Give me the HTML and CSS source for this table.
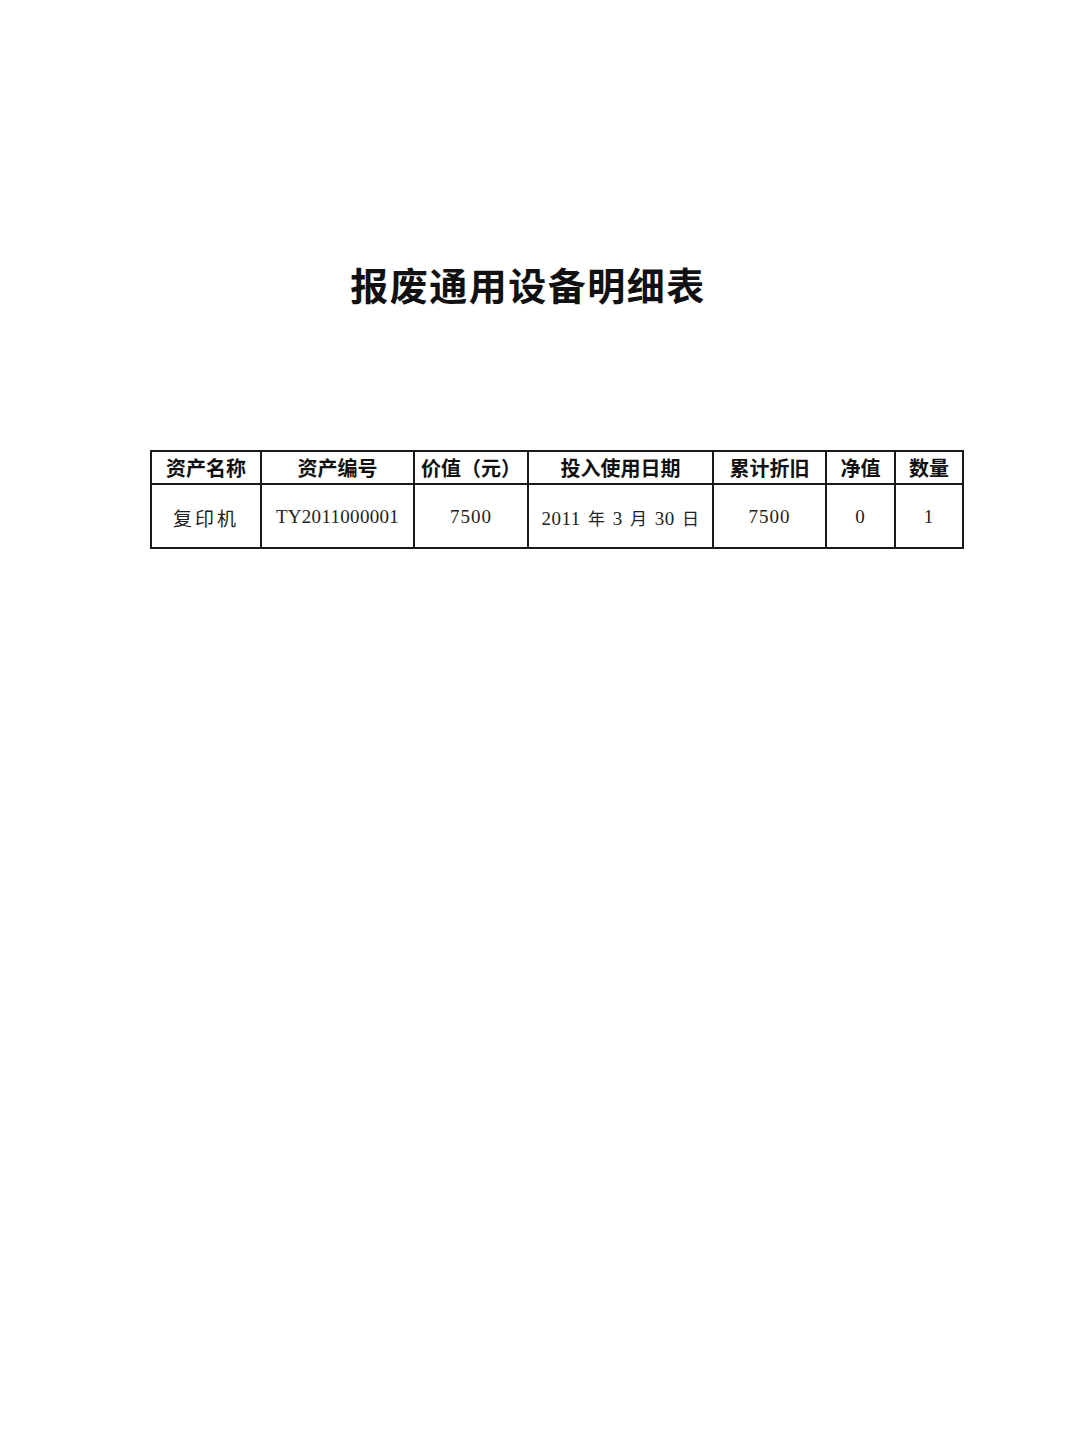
FILE: index.html
```html
<!DOCTYPE html>
<html lang="zh-CN">
<head>
<meta charset="utf-8">
<title>报废通用设备明细表</title>
<link rel="stylesheet" href="styles.css">
</head>
<body>
<div class="page">
  <h1 class="title">报废通用设备明细表</h1>
  <div class="table-wrap">
    <table class="detail">
      <colgroup>
        <col class="c1"><col class="c2"><col class="c3"><col class="c4"><col class="c5"><col class="c6"><col class="c7">
      </colgroup>
      <thead>
        <tr>
          <th>资产名称</th>
          <th>资产编号</th>
          <th>价值（元）</th>
          <th>投入使用日期</th>
          <th>累计折旧</th>
          <th>净值</th>
          <th>数量</th>
        </tr>
      </thead>
      <tbody>
        <tr>
          <td class="cjk">复印机</td>
          <td class="num code">TY2011000001</td>
          <td class="num">7500</td>
          <td class="num date">2011 <span class="cj">年</span> 3 <span class="cj">月</span> 30 <span class="cj">日</span></td>
          <td class="num">7500</td>
          <td class="num">0</td>
          <td class="num">1</td>
        </tr>
      </tbody>
    </table>
  </div>
</div>
</body>
</html>
```
FILE: styles.css
```css
html, body {
  margin: 0;
  padding: 0;
  background: #ffffff;
}
body {
  color: #111111;
  font-family: "Noto Sans CJK SC", "Noto Sans", sans-serif;
}
.page {
  width: 1080px;
  min-height: 1440px;
  box-sizing: border-box;
  padding-top: 262px;
}
.title {
  margin: 0;
  width: 1056px;
  text-align: center;
  font-size: 38px;
  line-height: 44px;
  font-weight: 700;
  letter-spacing: 1.5px;
  font-family: "Noto Sans CJK SC", serif;
}
.table-wrap {
  padding-left: 150px;
  padding-top: 144px;
}
.detail {
  border-collapse: collapse;
  table-layout: fixed;
  width: 812px;
}
.c1 { width: 110px; }
.c2 { width: 153px; }
.c3 { width: 114px; }
.c4 { width: 185px; }
.c5 { width: 113px; }
.c6 { width: 69px; }
.c7 { width: 68px; }
.detail th, .detail td {
  border: 2px solid #1a1a1a;
  padding: 0;
  text-align: center;
  vertical-align: middle;
  white-space: nowrap;
}
.detail th {
  height: 31px;
  font-size: 20px;
  font-weight: 700;
  line-height: 28px;
}
.detail td {
  height: 60px;
  font-weight: 400;
  color: #222;
  padding-top: 2px;
}
.cjk {
  font-size: 19px;
  letter-spacing: 3px;
  padding-left: 3px;
}
.num {
  font-family: "Liberation Serif", "Noto Sans CJK SC", serif;
  font-size: 19px;
  letter-spacing: 1px;
}
.code {
  letter-spacing: 0.3px;
}
.date {
  letter-spacing: 0.5px;
  word-spacing: 2px;
}
.cj {
  font-family: "Noto Sans CJK SC", sans-serif;
  font-size: 17px;
}
```
